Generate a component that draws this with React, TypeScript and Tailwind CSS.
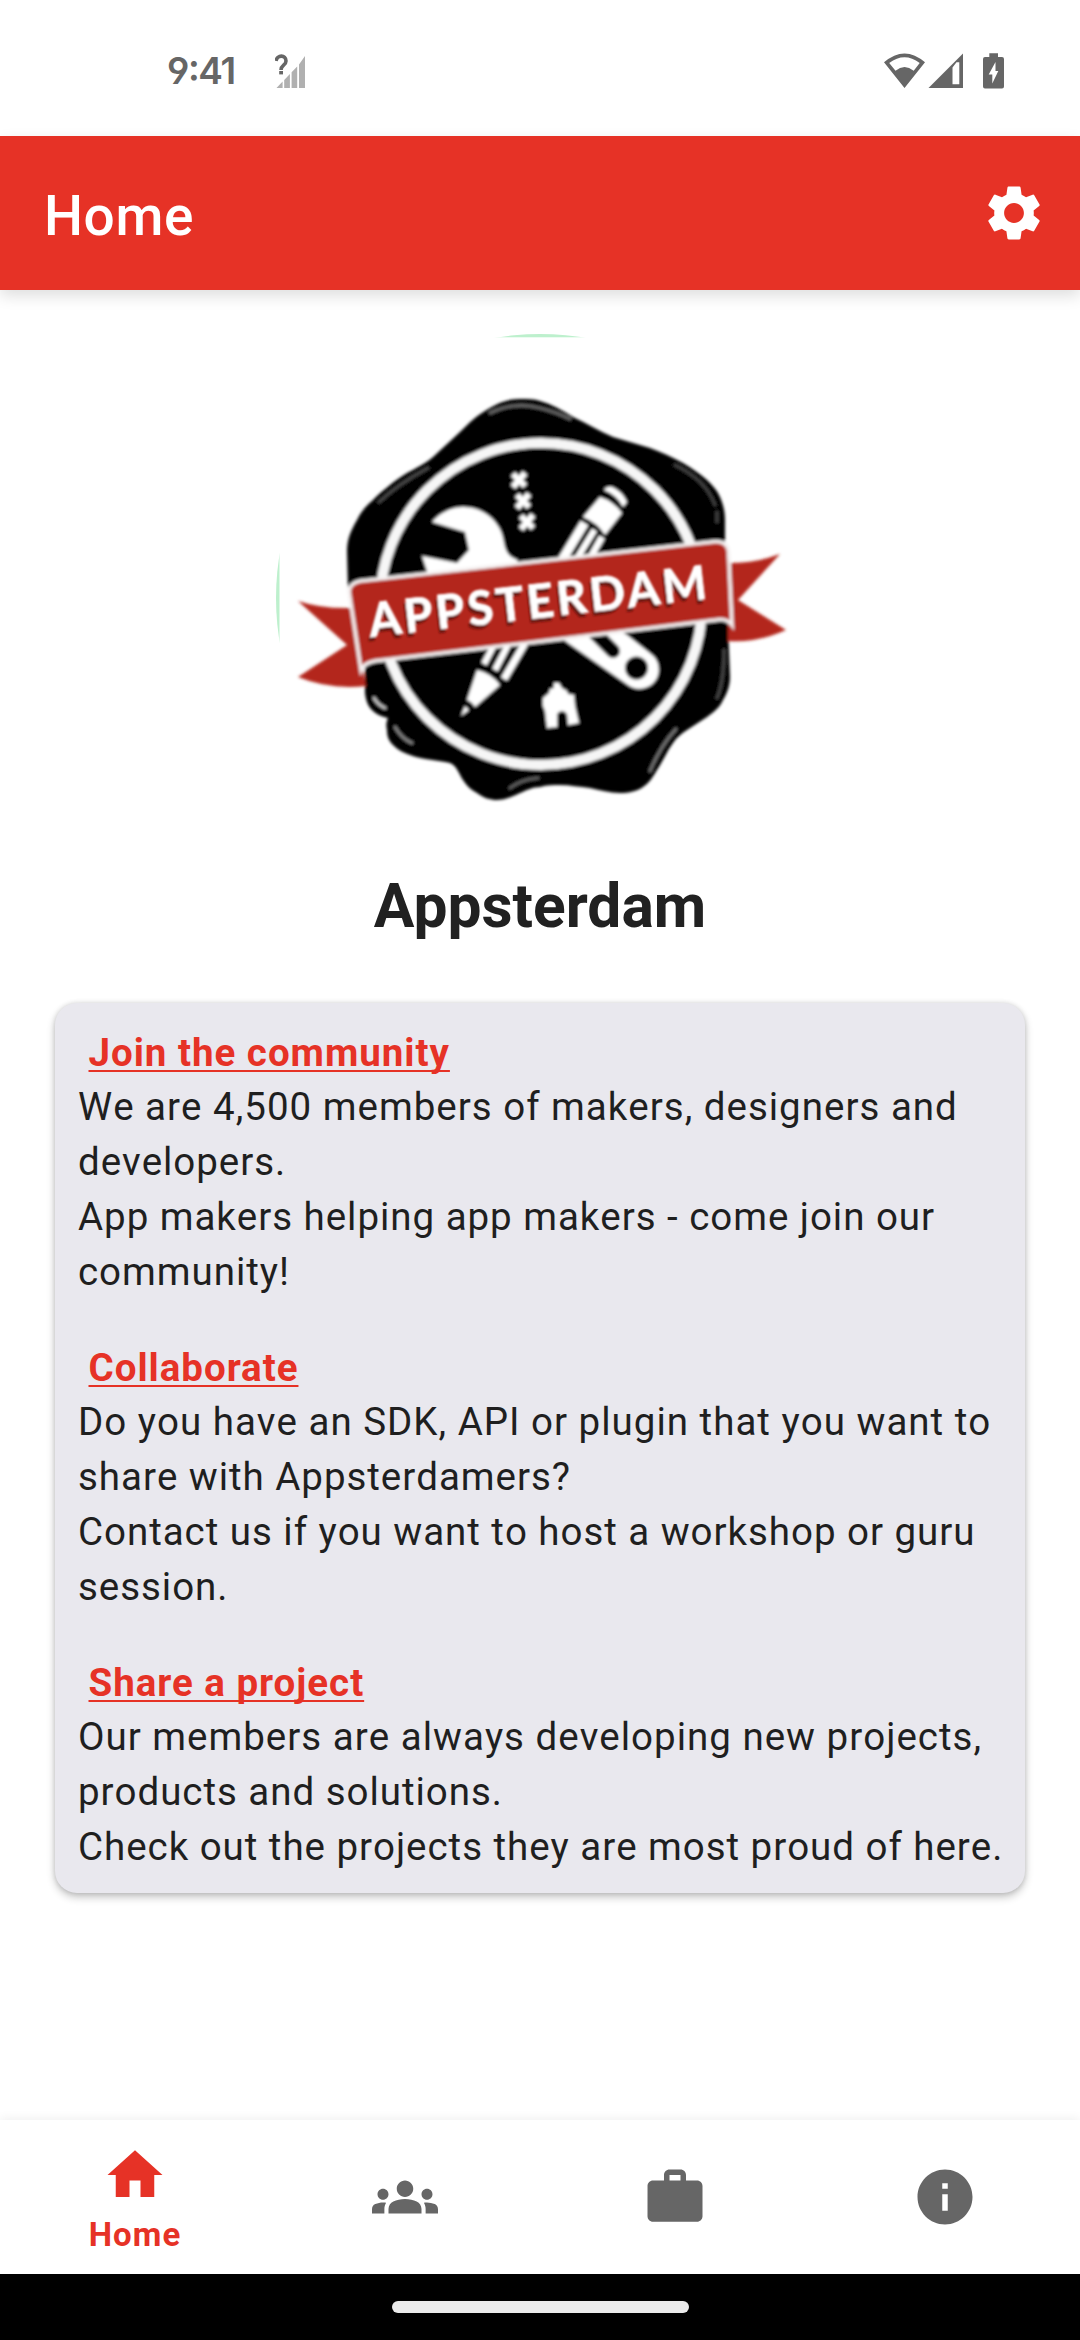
import React from "react";
import { MdGroups, MdHome, MdInfo, MdSettings, MdWork } from "react-icons/md";

const sections = [
  {
    title: "Join the community",
    lines: [
      "We are 4,500 members of makers, designers and",
      "developers.",
      "App makers helping app makers - come join our",
      "community!",
    ],
  },
  {
    title: "Collaborate",
    lines: [
      "Do you have an SDK, API or plugin that you want to",
      "share with Appsterdamers?",
      "Contact us if you want to host a workshop or guru",
      "session.",
    ],
  },
  {
    title: "Share a project",
    lines: [
      "Our members are always developing new projects,",
      "products and solutions.",
      "Check out the projects they are most proud of here.",
    ],
  },
];

function StatusBar() {
  return (
    <div className="flex h-[136px] shrink-0 items-start pl-[167px] pr-[75px] pt-[53px] text-[#666666]">
      <span className="-mt-[4px] w-[108px] whitespace-nowrap font-['Inter',sans-serif] text-[37px] leading-[44px] font-semibold tracking-[-1.4px] [font-feature-settings:'cv04','calt']">
        9:41
      </span>
      <svg className="h-[36px] w-[32px]" viewBox="275 53 32 36">
        <path
          fill="#b0b0b0"
          d="M276.5 88L282.6 81.6V88ZM284.2 88V80L289.9 74V88ZM291.6 88V72.3L297.2 66.4V88ZM299 88V64.5L305 56V88Z"
        />
        <path d="M276 61C277 54.5 286 54.5 286 61C286 65.5 281 65 281 70" fill="none" stroke="#666" strokeWidth="3.6" />
        <rect x="279.2" y="71" width="3.8" height="3.4" fill="#666" />
      </svg>
      <svg className="ml-auto h-[36px] w-[122px]" viewBox="882 53 122 36" fill="currentColor">
        <path
          fillRule="evenodd"
          d="M883 62.3Q903.500 44.500 924 62.300L903.500 88ZM888.200 63L894.500 70.700Q903.500 63.500 912.700 70.700L918.700 63Q903.500 51.500 888.200 63Z"
        />
        <path fillRule="evenodd" d="M927.500 88L962 53.500V88ZM951.500 67.500V84.300H958.300V62.300L955.500 62.300Z" />
        <path
          fillRule="evenodd"
          d="M988.300 53.300H997V57H1001Q1003 57 1003 59V86.500Q1003 88.500 1001 88.500H984Q982 88.500 982 86.500V59Q982 57 984 57H988.300ZM994.500 62L987.700 74.500H991.300V83.500L997.300 71H994.500Z"
        />
      </svg>
    </div>
  );
}

function Badge() {
  return (
    <svg className="h-[528px] w-[528px]" viewBox="276 334 528 528">
      <defs>
        <filter id="soft" x="-5%" y="-5%" width="110%" height="110%">
          <feGaussianBlur stdDeviation="1.7" />
        </filter>
        <filter id="glow" x="-5%" y="-5%" width="110%" height="110%">
          <feGaussianBlur stdDeviation="1.1" />
        </filter>
      </defs>
      <circle cx="540" cy="598" r="264" fill="#bdf0cd" />
      <rect x="279.500" y="337.300" width="530" height="530" fill="#fff" />
      <g filter="url(#soft)">
        <path d="M520 399C508 399 498 403 490 408C477 415 469 423 460 432L433 457C425 464 416 468 407 473C393 482 383 490 373 500C365 507 360 513 357 520C350 532 347 540 347 552L348 590L365 660V693C366 701 368 706 372 710C377 715 383 717 388 718C386 723 386 726 387 730C387 737 389 741 393 745C398 750 404 753 410 755C424 760 438 760 450 763C457 766 459 774 463 780C467 786 471 790 477 793C484 798 490 800 497 800C506 800 513 796 520 793C527 790 533 787 540 787C547 785 553 785 560 785C570 785 580 787 590 788C600 790 610 793 620 793C629 793 637 791 643 787C649 783 653 777 657 770C663 761 667 751 673 743C677 737 682 733 687 730L707 717C714 712 720 707 723 700C728 692 730 684 730 677L728 627L725 540V520C725 511 723 504 720 497C717 490 712 485 707 480C700 474 692 468 683 463C672 457 661 452 650 448L613 437C599 431 586 423 573 417C562 410 551 404 540 401C534 399 527 399 520 399Z" />
        <circle cx="541" cy="604" r="161" fill="none" stroke="#f6f6f6" strokeWidth="10" />
        <g fill="none" stroke="#666" strokeWidth="2.600" strokeLinecap="round">
          <path d="M490 413Q515 401 540 408Q556 412 570 419" stroke="#6c6c6c" />
          <path d="M379 502Q398 484 428 468" stroke="#4c4c4c" />
          <path d="M675 465Q706 480 715 505M717 512V522" stroke="#444" />
          <path d="M374 698Q378 705 385 708" stroke="#ccc" />
          <path d="M395 727Q402 739 412 743" stroke="#888" />
          <path d="M510 788Q522 779 538 778" />
          <path d="M650 771Q661 745 676 729" stroke="#777" />
          <path d="M717 698Q724 682 724 650" stroke="#4c4c4c" />
        </g>
        <g stroke="#fff" strokeWidth="6" fill="none">
          <path d="M513 474L525 486M525 473L513 487" />
          <path d="M517 495L529 507M529 494L517 508" />
          <path d="M521 516L533 528M533 515L521 529" />
        </g>
        <path
          fill="#fff"
          d="M432 522C440 513 451 507 463 507C477 507 491 514 498 526C504 535 503 542 506 550C508 555 512 558 518 560L510 575H428L426 568L422 556L457 563L469 550L465 532Z"
        />
        <path
          fill="#fff"
          fillRule="evenodd"
          d="M560 637L568 643L628 685A19 19 0 0 0 651 654L627 635L600 620ZM648 668A11.500 11.500 0 1 1 625 668A11.500 11.500 0 1 1 648 668Z"
        />
        <path d="M592 630L613 651" stroke="#000" strokeWidth="14" strokeLinecap="round" />
        <g fill="#fff">
          <path d="M604 490Q607 486 612 487Q622 491 627 502L623 507Q617 495 604 490Z" />
          <path d="M600 497Q613 501 622 513L605 535Q598 523 583 517Z" />
          <path d="M477 670Q491 673 500 685L475 707Q472 702 467 700Z" />
          <path d="M465 706L469 710L461 716Z" />
        </g>
        <g stroke="#fff" fill="none">
          <path d="M584.500 523L562 560" strokeWidth="9" />
          <path d="M594.500 530L576 560" strokeWidth="6" />
          <path d="M602 537L589 560" strokeWidth="6.500" />
          <path d="M494 645L484 664" strokeWidth="6" />
          <path d="M508 645L495 670" strokeWidth="6" />
          <path d="M525 643L504 679" strokeWidth="7" />
        </g>
        <path
          fill="#fff"
          d="M543 698L549 693L550 689L554 688V683H559L562 688L567 691L568 694L574 695L575 706L579 723L568 725L567 714Q562 708 557 714V727L547 728L545 711L543 706Z"
        />
        <path fill="#b3261b" d="M298 601Q322 609 352 608L366 686Q330 690 298 677L347 645Z" />
        <path fill="#b3261b" d="M728 563Q757 563 780 554L738 600L786 630Q757 643 728 641Z" />
        <path
          fill="#b3261b"
          stroke="#f5f1f1"
          strokeWidth="3.500"
          d="M349 591Q350 583 360 581L540 561L715 541.500Q727 541 728.500 551L732 625Q727 618 716 620L540 641.500L375 661Q364 663 361 670Z"
        />
      </g>
      <g filter="url(#glow)" fontFamily="Lato, sans-serif" fontWeight="700" fontSize="47">
        <text transform="translate(368.500 641.500) rotate(-6.500)" textLength="340" fill="#6b140e">
          APPSTERDAM
        </text>
        <text transform="translate(370.500 637) rotate(-6.500)" textLength="340" fill="#fff" stroke="#fff" strokeWidth="0.800">
          APPSTERDAM
        </text>
      </g>
    </svg>
  );
}

function InfoCard() {
  return (
    <section className="mx-[55px] flex h-[890px] flex-col rounded-[22px] bg-[#e9e8ee] px-[23px] pt-[24px] text-[38.5px] text-[#1f1f1f] shadow-[0_4px_8px_rgba(0,0,0,0.24),0_0_5px_rgba(0,0,0,0.12)]">
      {sections.map((s) => (
        <article key={s.title} className="mb-[43px]">
          <h2 className="pl-[10.5px] text-[38.500px] leading-[52px] font-bold tracking-[0.98px] text-[#e63226]">
            <a className="underline decoration-[2px] underline-offset-[4px] [text-decoration-skip-ink:none]">{s.title}</a>
          </h2>
          {s.lines.map((line) => (
            <p
              key={line}
              className="whitespace-nowrap leading-[55px] tracking-[0.96px] [font-kerning:none] first-of-type:tracking-[1px]"
            >
              {line}
            </p>
          ))}
        </article>
      ))}
    </section>
  );
}

function BottomNav() {
  return (
    <nav className="grid h-[154px] shrink-0 grid-cols-4 bg-white text-[#666666] shadow-[0_-1px_10px_rgba(0,0,0,0.07)]">
      <div className="flex flex-col items-center pt-[22px] text-[#e63226]">
        <MdHome size={66} />
        <span className="mt-[7px] text-[33px] leading-[40px] font-bold tracking-[1.100px]">Home</span>
      </div>
      <div className="flex items-center justify-center">
        <MdGroups size={66} />
      </div>
      <div className="flex items-center justify-center">
        <MdWork size={66} />
      </div>
      <div className="flex items-center justify-center">
        <MdInfo size={66} />
      </div>
    </nav>
  );
}

export default function App() {
  return (
    <div className="flex h-[2340px] w-[1080px] flex-col overflow-hidden bg-white font-['Roboto',sans-serif]">
      <StatusBar />
      <header className="flex h-[154px] shrink-0 items-center justify-between bg-[#e63226] pl-[44px] pr-[33px] text-white shadow-[0_6px_14px_rgba(0,0,0,0.13)]">
        <h1 className="mt-[5px] text-[55px] leading-[64px] font-medium tracking-[0.600px]">Home</h1>
        <MdSettings size={66} />
      </header>
      <main className="flex flex-1 flex-col">
        <div className="flex justify-center pt-[44px]">
          <Badge />
        </div>
        <h2 className="mt-[6px] mb-[58px] text-center text-[60.500px] leading-[77px] font-bold text-[#212121]">Appsterdam</h2>
        <InfoCard />
      </main>
      <BottomNav />
      <div className="flex h-[66px] shrink-0 justify-center bg-black pt-[27px]">
        <div className="h-[12px] w-[297px] rounded-full bg-[#ebebeb]" />
      </div>
    </div>
  );
}
